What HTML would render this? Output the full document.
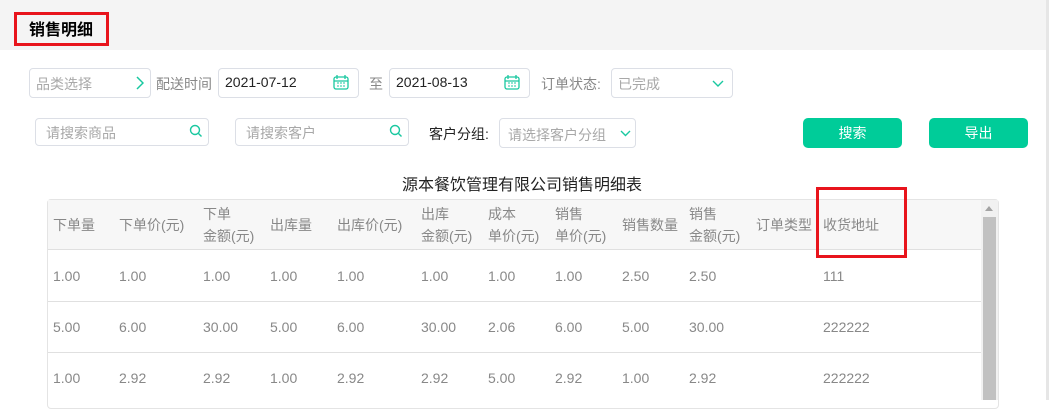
<!DOCTYPE html>
<html><head><meta charset="utf-8"><style>
*{margin:0;padding:0;box-sizing:border-box}
body{width:1049px;height:400px;overflow:hidden;background:#fff;font-family:"Liberation Sans","Noto Sans CJK SC",sans-serif;font-size:14px;color:#333;position:relative}
.a{position:absolute;white-space:nowrap}
.box{position:absolute;border:1px solid #dcdfe6;border-radius:4px;background:#fff}
.ph{color:#a8a8a8}
.lbl{color:#888}
.btn{position:absolute;background:#00cc99;color:#fff;border-radius:5px;text-align:center;line-height:30px;font-size:14px}
.th{position:absolute;color:#888;font-size:14px;line-height:22px}
.td{position:absolute;color:#888;font-size:14px}
</style></head><body>
<div class="a" style="left:0;top:0;width:1046px;height:50px;background:#f4f4f4"></div>
<div class="a" style="left:1046px;top:0;width:3px;height:400px;background:#e6e6e6"></div>
<div class="a" style="left:14px;top:12px;width:95px;height:34px;border:3px solid #e8141c"></div>
<div class="a" style="left:29px;top:16px;font-size:16px;font-weight:bold;color:#000">销售明细</div>

<div class="box" style="left:29px;top:68px;width:122px;height:30px"></div>
<div class="a ph" style="left:36px;top:74px">品类选择</div>
<svg class="a" style="left:136px;top:76px" width="8" height="14"><path d="M1 1l6 6-6 6" stroke="#19c8a0" stroke-width="1.5" fill="none"/></svg>
<div class="a lbl" style="left:156px;top:74px">配送时间</div>
<div class="box" style="left:218px;top:68px;width:141px;height:30px"></div>
<div class="a" style="left:225px;top:74px;color:#222">2021-07-12</div>
<svg class="a" style="left:333px;top:74px" width="16" height="16"><rect x="1" y="3" width="14" height="12" rx="2" stroke="#19c8a0" fill="none" stroke-width="1.3"/><path d="M4 1v4M12 1v4M1 7h14" stroke="#19c8a0" stroke-width="1.3"/><path d="M4 9h2M7 9h2M10 9h2M4 12h2M7 12h2M10 12h2" stroke="#19c8a0"/></svg>
<div class="a lbl" style="left:369px;top:74px">至</div>
<div class="box" style="left:389px;top:68px;width:141px;height:30px"></div>
<div class="a" style="left:396px;top:74px;color:#222">2021-08-13</div>
<svg class="a" style="left:504px;top:74px" width="16" height="16"><rect x="1" y="3" width="14" height="12" rx="2" stroke="#19c8a0" fill="none" stroke-width="1.3"/><path d="M4 1v4M12 1v4M1 7h14" stroke="#19c8a0" stroke-width="1.3"/><path d="M4 9h2M7 9h2M10 9h2M4 12h2M7 12h2M10 12h2" stroke="#19c8a0"/></svg>
<div class="a lbl" style="left:541px;top:74px">订单状态:</div>
<div class="box" style="left:611px;top:68px;width:122px;height:30px"></div>
<div class="a ph" style="left:618px;top:74px">已完成</div>
<svg class="a" style="left:712px;top:80px" width="12" height="8"><path d="M1 1l5 5 5-5" stroke="#19c8a0" stroke-width="1.4" fill="none"/></svg>

<div class="box" style="left:35px;top:118px;width:174px;height:28px"></div>
<div class="a ph" style="left:46px;top:123px">请搜索商品</div>
<svg class="a" style="left:189px;top:124px" width="14" height="14"><circle cx="6" cy="6" r="4.5" stroke="#19c8a0" stroke-width="1.4" fill="none"/><path d="M9.5 9.5l3 3" stroke="#19c8a0" stroke-width="1.4"/></svg>
<div class="box" style="left:235px;top:118px;width:174px;height:28px"></div>
<div class="a ph" style="left:246px;top:123px">请搜索客户</div>
<svg class="a" style="left:389px;top:124px" width="14" height="14"><circle cx="6" cy="6" r="4.5" stroke="#19c8a0" stroke-width="1.4" fill="none"/><path d="M9.5 9.5l3 3" stroke="#19c8a0" stroke-width="1.4"/></svg>
<div class="a" style="left:429px;top:124px;color:#222">客户分组:</div>
<div class="box" style="left:499px;top:118px;width:137px;height:30px"></div>
<div class="a ph" style="left:508px;top:125px">请选择客户分组</div>
<svg class="a" style="left:620px;top:130px" width="11" height="7"><path d="M1 1l4.5 4.5L10 1" stroke="#19c8a0" stroke-width="1.4" fill="none"/></svg>
<div class="btn" style="left:803px;top:118px;width:99px;height:30px">搜索</div>
<div class="btn" style="left:929px;top:118px;width:99px;height:30px">导出</div>

<div class="a" style="left:402px;top:171px;font-size:16px;color:#222">源本餐饮管理有限公司销售明细表</div>

<div class="a" style="left:47px;top:199px;width:952px;height:210px;border:1px solid #e4e4e4;border-radius:4px"></div>
<div class="a" style="left:48px;top:200px;width:933px;height:50px;background:#f7f7f7;border-bottom:1px solid #e0e0e0"></div>
<div class="a" style="left:48px;top:301px;width:933px;height:1px;background:#e0e0e0"></div>
<div class="a" style="left:48px;top:352px;width:933px;height:1px;background:#e0e0e0"></div>
<div class="a" style="left:981px;top:200px;width:17px;height:200px;background:#f1f1f1"></div>
<div class="a" style="left:983px;top:217px;width:13px;height:183px;background:#c1c1c1"></div>
<svg class="a" style="left:985px;top:206px" width="8" height="5"><path d="M0 5L4 0l4 5z" fill="#a3a3a3"/></svg>

<div class="th" style="left:53px;top:214px">下单量</div>
<div class="th" style="left:119px;top:214px">下单价(元)</div>
<div class="th" style="left:203px;top:203px">下单<br>金额(元)</div>
<div class="th" style="left:270px;top:214px">出库量</div>
<div class="th" style="left:337px;top:214px">出库价(元)</div>
<div class="th" style="left:421px;top:203px">出库<br>金额(元)</div>
<div class="th" style="left:488px;top:203px">成本<br>单价(元)</div>
<div class="th" style="left:555px;top:203px">销售<br>单价(元)</div>
<div class="th" style="left:622px;top:214px">销售数量</div>
<div class="th" style="left:689px;top:203px">销售<br>金额(元)</div>
<div class="th" style="left:756px;top:214px">订单类型</div>
<div class="th" style="left:823px;top:214px">收货地址</div>
<div class="a" style="left:816px;top:187px;width:91px;height:71px;border:3px solid #e8141c"></div>

<div class="td" style="left:53px;top:268px">1.00</div><div class="td" style="left:119px;top:268px">1.00</div><div class="td" style="left:203px;top:268px">1.00</div><div class="td" style="left:270px;top:268px">1.00</div><div class="td" style="left:337px;top:268px">1.00</div><div class="td" style="left:421px;top:268px">1.00</div><div class="td" style="left:488px;top:268px">1.00</div><div class="td" style="left:555px;top:268px">1.00</div><div class="td" style="left:622px;top:268px">2.50</div><div class="td" style="left:689px;top:268px">2.50</div><div class="td" style="left:823px;top:268px">111</div>
<div class="td" style="left:53px;top:319px">5.00</div><div class="td" style="left:119px;top:319px">6.00</div><div class="td" style="left:203px;top:319px">30.00</div><div class="td" style="left:270px;top:319px">5.00</div><div class="td" style="left:337px;top:319px">6.00</div><div class="td" style="left:421px;top:319px">30.00</div><div class="td" style="left:488px;top:319px">2.06</div><div class="td" style="left:555px;top:319px">6.00</div><div class="td" style="left:622px;top:319px">5.00</div><div class="td" style="left:689px;top:319px">30.00</div><div class="td" style="left:823px;top:319px">222222</div>
<div class="td" style="left:53px;top:370px">1.00</div><div class="td" style="left:119px;top:370px">2.92</div><div class="td" style="left:203px;top:370px">2.92</div><div class="td" style="left:270px;top:370px">1.00</div><div class="td" style="left:337px;top:370px">2.92</div><div class="td" style="left:421px;top:370px">2.92</div><div class="td" style="left:488px;top:370px">5.00</div><div class="td" style="left:555px;top:370px">2.92</div><div class="td" style="left:622px;top:370px">1.00</div><div class="td" style="left:689px;top:370px">2.92</div><div class="td" style="left:823px;top:370px">222222</div>
</body></html>
